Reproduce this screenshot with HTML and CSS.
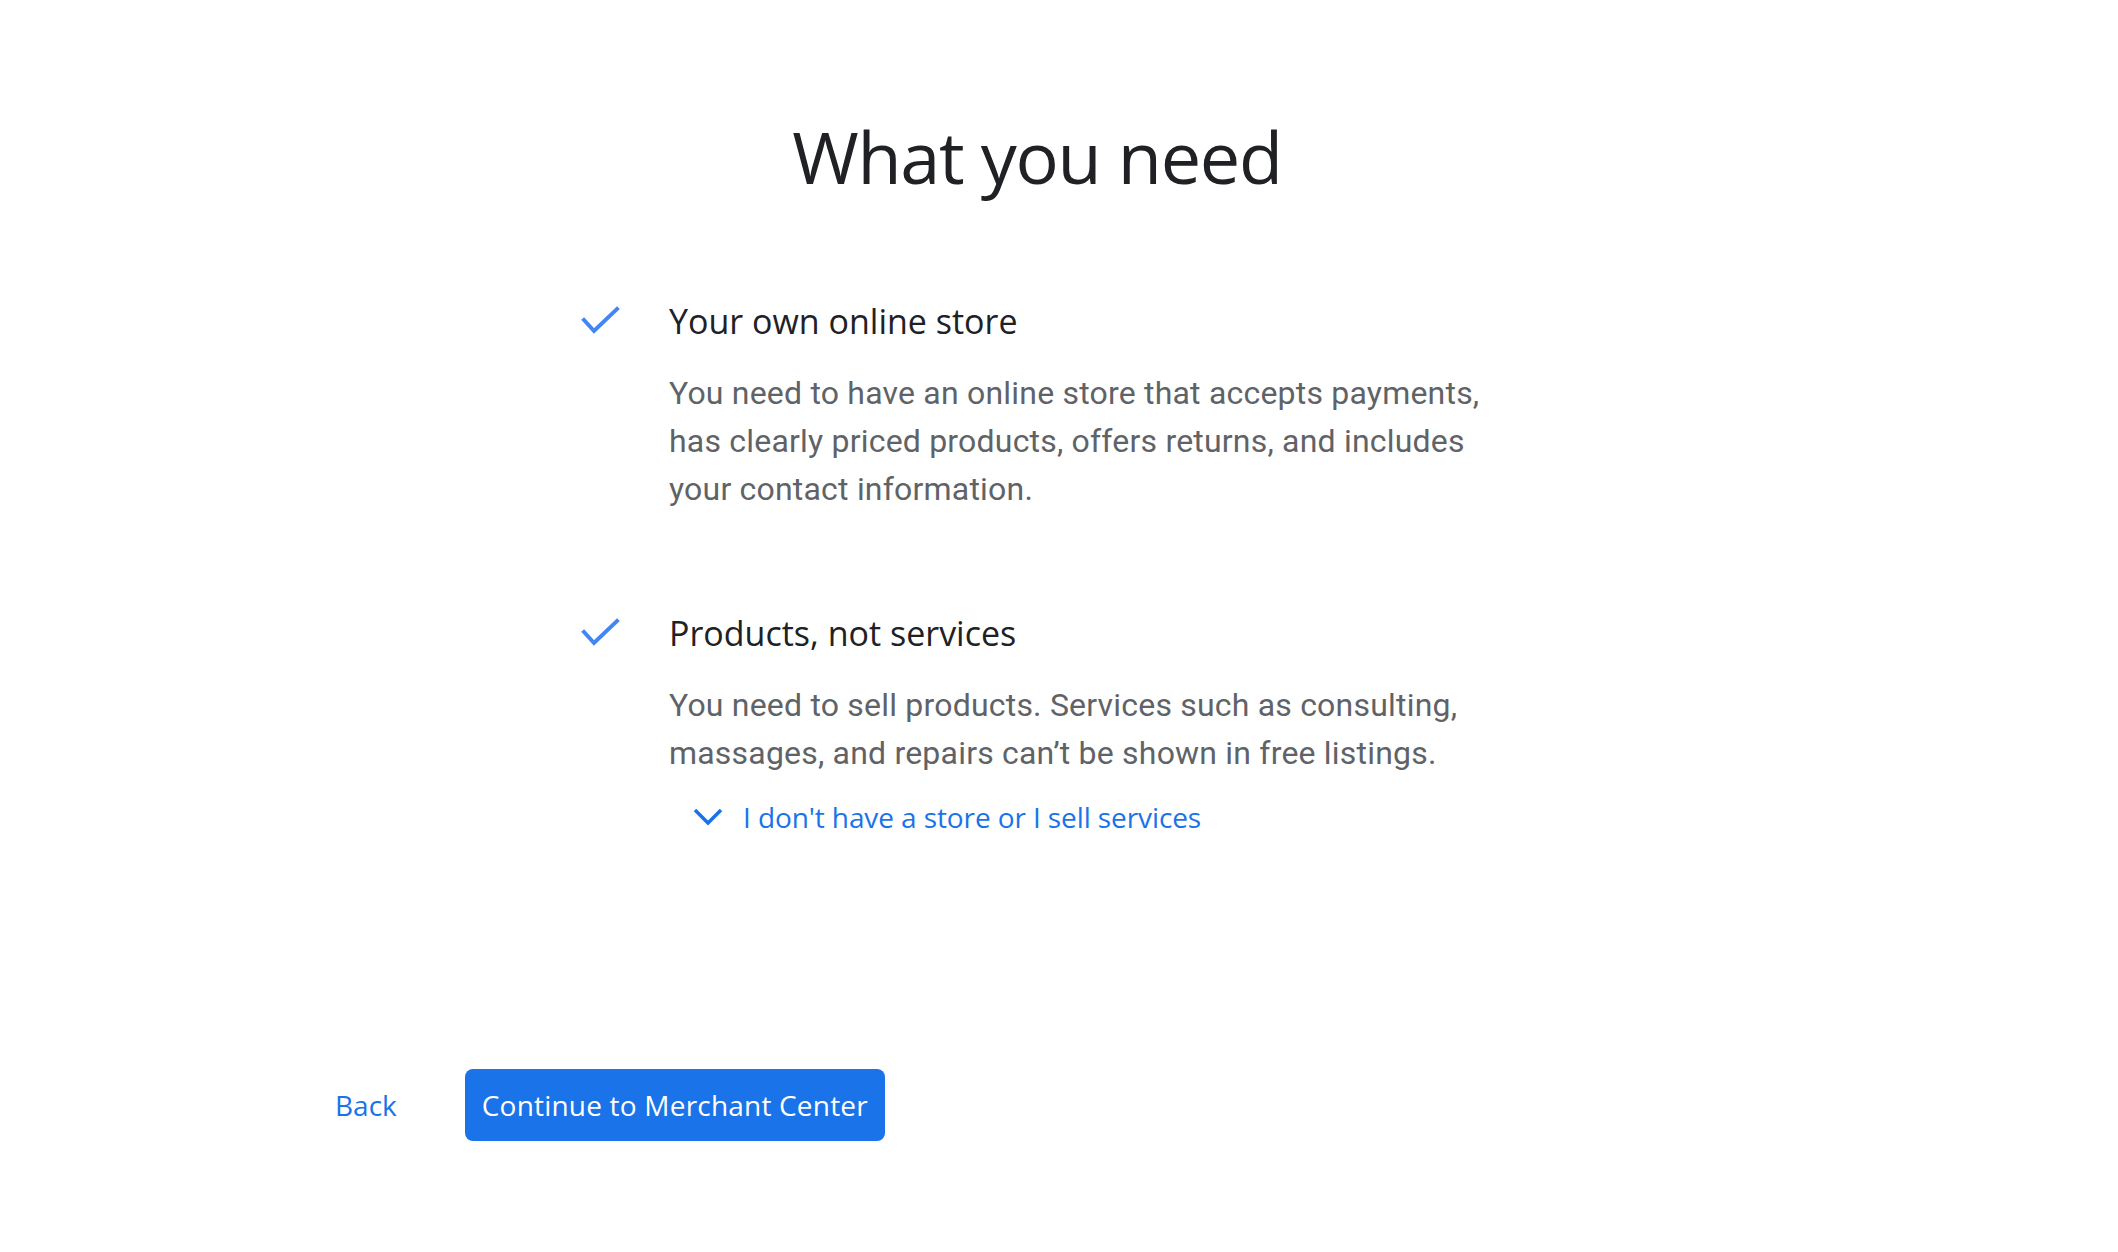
FILE: index.html
```html
<!DOCTYPE html>
<html lang="en">
<head>
<meta charset="utf-8">
<title>What you need</title>
<link rel="stylesheet" href="styles.css">
</head>
<body>
<main class="page">
  <h1 class="title">What you need</h1>
  <section class="items">
    <div class="item">
      <svg class="check" viewBox="0 0 40 30" width="40" height="30" aria-hidden="true">
        <polyline points="3,14 13,25 36,3" fill="none" stroke="#4285f4" stroke-width="4" stroke-linecap="square" stroke-linejoin="miter"/>
      </svg>
      <h2 class="item-title">Your own online store</h2>
      <p class="item-text">You need to have an online store that accepts payments, has clearly priced products, offers returns, and includes your contact information.</p>
    </div>
    <div class="item">
      <svg class="check" viewBox="0 0 40 30" width="40" height="30" aria-hidden="true">
        <polyline points="3,14 13,25 36,3" fill="none" stroke="#4285f4" stroke-width="4" stroke-linecap="square" stroke-linejoin="miter"/>
      </svg>
      <h2 class="item-title">Products, not services</h2>
      <p class="item-text">You need to sell products. Services such as consulting, massages, and repairs can’t be shown in free listings.</p>
      <a class="expand" href="#">
        <svg class="chevron" viewBox="0 0 32 20" width="32" height="20" aria-hidden="true">
          <polyline points="2,3 15,16 28,3" fill="none" stroke="#1a73e8" stroke-width="3.5"/>
        </svg>
        <span>I don't have a store or I sell services</span>
      </a>
    </div>
  </section>
</main>
<footer class="actions">
  <a class="btn-text" href="#">Back</a>
  <a class="btn-primary" href="#">Continue to Merchant Center</a>
</footer>
</body>
</html>
```

FILE: styles.css
```css
html, body {
  margin: 0;
  padding: 0;
  background: #ffffff;
}

body {
  font-family: Roboto, "Liberation Sans", sans-serif;
  color: #202124;
}

.page {
  width: 2074px;
  padding-top: 112px;
}

.title {
  margin: 0;
  text-align: center;
  font-family: "Open Sans", "Liberation Sans", sans-serif;
  font-weight: 400;
  font-size: 72px;
  line-height: 88px;
  color: #202124;
  letter-spacing: -1.3px;
}

.items {
  width: 912px;
  margin: 99px auto 0;
  display: flex;
  flex-direction: column;
  gap: 98px;
}

.item {
  display: grid;
  grid-template-columns: 88px 1fr;
  align-items: center;
}

.check {
  grid-column: 1;
  grid-row: 1;
  display: block;
}

.item-title {
  grid-column: 2;
  grid-row: 1;
  margin: 0;
  font-family: "Open Sans", "Liberation Sans", sans-serif;
  font-weight: 400;
  font-size: 34px;
  line-height: 44px;
  color: #202124;
  letter-spacing: 0;
}

.item-text {
  grid-column: 2;
  margin: 26px 0 0;
  font-family: Roboto, "Liberation Sans", sans-serif;
  font-size: 32px;
  line-height: 48px;
  color: #5f6368;
  letter-spacing: 0.2px;
}

.expand {
  grid-column: 2;
  margin: 20px 0 0 24px;
  display: flex;
  align-items: center;
  gap: 18px;
  text-decoration: none;
  color: #1a73e8;
  font-family: "Open Sans", "Liberation Sans", sans-serif;
  font-size: 28px;
  line-height: 40px;
  letter-spacing: -0.1px;
}

.chevron {
  display: block;
}

.actions {
  margin-top: 232px;
  padding-left: 311px;
  display: flex;
  align-items: center;
  gap: 44px;
}

.btn-text {
  padding: 0 24px;
  text-decoration: none;
  color: #1a73e8;
  font-family: "Open Sans", "Liberation Sans", sans-serif;
  font-weight: 500;
  font-size: 28px;
  line-height: 40px;
}

.btn-primary {
  display: flex;
  align-items: center;
  height: 72px;
  padding: 0 17px;
  box-sizing: border-box;
  border-radius: 8px;
  background: #1a73e8;
  color: #ffffff;
  text-decoration: none;
  font-family: "Open Sans", "Liberation Sans", sans-serif;
  font-weight: 500;
  font-size: 28px;
  letter-spacing: 0.2px;
}
```
